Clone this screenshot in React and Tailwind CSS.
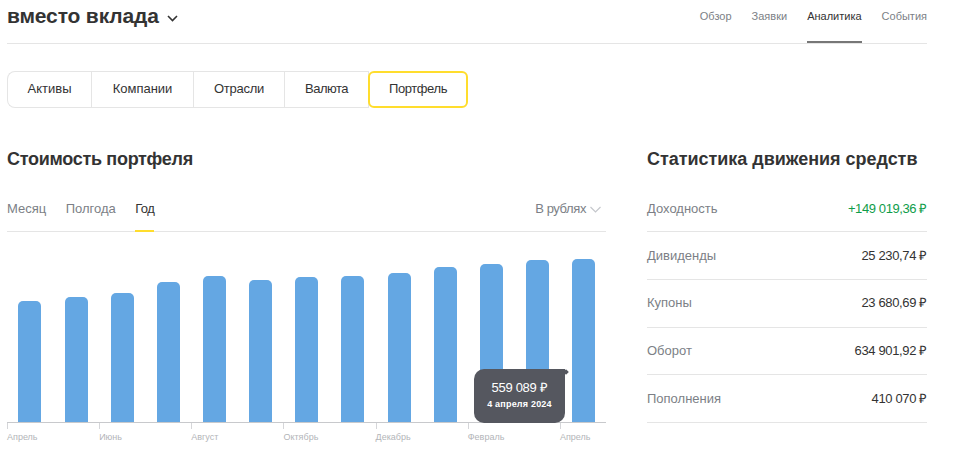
import React from "react";

const navItems = ["Обзор", "Заявки", "Аналитика", "События"];
const tabs = [
  { label: "Активы", width: "w-[84px]", tracking: "" },
  { label: "Компании", width: "w-[102px]", tracking: "" },
  { label: "Отрасли", width: "w-[91px]", tracking: "tracking-[-0.25px]" },
  { label: "Валюта", width: "w-[84px]", tracking: "tracking-[-0.5px]" },
];
const bars = [121, 125, 129, 140, 146, 142, 145, 146, 149, 155, 158, 162, 163];
const months = ["Апрель", "Июнь", "Август", "Октябрь", "Декабрь", "Февраль", "Апрель"];
const stats = [
  { label: "Дивиденды", value: "25 230,74 ₽" },
  { label: "Купоны", value: "23 680,69 ₽" },
  { label: "Оборот", value: "634 901,92 ₽" },
  { label: "Пополнения", value: "410 070 ₽" },
];

const App = () => {
  return (
    <div className="h-[469px] w-[960px] overflow-hidden bg-white pl-[7px] font-['Liberation_Sans',sans-serif] text-[#333333]">
      <div className="flex h-[44px] w-[920px] items-start justify-between border-b border-[#e5e5e5]">
        <div className="flex items-center gap-[8px]">
          <h1 className="text-[21px] leading-[32px] font-bold tracking-[-0.15px] text-[#333333]">вместо вклада</h1>
          <svg width="11" height="7" viewBox="0 0 11 7" fill="none" className="mt-[4px]">
            <path d="M1 1l4.5 4.5L10 1" stroke="#333333" strokeWidth="1.6" />
          </svg>
        </div>
        <nav className="flex gap-[20px]">
          {navItems.map((item) => (
            <div
              key={item}
              className={`h-[43px] pt-[8px] text-[11px] leading-[16px] ${
                item === "Аналитика" ? "border-b-2 border-[#777777] text-[#333333]" : "text-[#7c7f86]"
              }`}
            >
              {item}
            </div>
          ))}
        </nav>
      </div>

      <div className="mt-[27px] flex h-[37px] w-[461px]">
        <div className="flex rounded-l-[8px] border border-r-0 border-[#e5e5e5]">
          {tabs.map((tab) => (
            <div
              key={tab.label}
              className={`flex items-center justify-center border-r border-[#e5e5e5] pb-[1px] text-[13px] ${tab.width} ${tab.tracking}`}
            >
              {tab.label}
            </div>
          ))}
        </div>
        <div className="-ml-px flex flex-1 items-center justify-center rounded-[6px] border-2 border-[#ffdd2d] pb-[1px] text-[13px] tracking-[-0.4px]">
          Портфель
        </div>
      </div>

      <div className="mt-[38px] flex items-start">
        <div className="w-[599px]">
          <h2 className="text-[18px] leading-[26px] font-bold tracking-[-0.3px] text-[#333333]">Стоимость портфеля</h2>
          <div className="mt-[21px] flex h-[39px] items-start justify-between border-b border-[#e5e5e5] pt-[6px]">
            <div className="flex gap-[19.5px] text-[13px] leading-[20px] text-[#7c7f86]">
              <span>Месяц</span>
              <span>Полгода</span>
              <span className="relative tracking-[-0.6px] text-[#333333]">
                Год
                <span className="absolute top-[31px] right-0 left-0 h-[2px] bg-[#ffdd2d]" />
              </span>
            </div>
            <div className="flex items-center gap-[4px] pr-[5px] text-[13px] leading-[20px] tracking-[-0.4px] text-[#7c7f86]">
              В рублях
              <svg width="11" height="7" viewBox="0 0 11 7" fill="none">
                <path d="M0.5 1l5 5 5-5" stroke="#c5c7cc" strokeWidth="1.2" />
              </svg>
            </div>
          </div>

          <div className="relative">
            <div className="flex h-[191px] items-end justify-between border-b border-[#c8c9cc] pr-[10.8px] pl-[11.4px]">
              {bars.map((height, i) => (
                <div key={i} className="w-[23px] rounded-t-[5px] bg-[#64a7e3]" style={{ height }} />
              ))}
            </div>
            <div className="absolute top-[137px] right-[41px] flex h-[54px] w-[91px] flex-col items-center rounded-[10px] rounded-tr-none bg-[#55575f] pt-[11px] text-white">
              <span className="text-[13px] leading-[16px] tracking-[-0.3px]">559 089 ₽</span>
              <span className="mt-[2px] text-[9px] leading-[12px] font-bold tracking-[0.2px]">4 апреля 2024</span>
              <span className="absolute top-[1px] right-[-3px] size-[4px] rotate-45 bg-[#55575f]" />
            </div>
            <div className="grid grid-cols-13">
              {months.map((month, i) => (
                <div key={i} className="col-span-2 last:col-span-1">
                  <div className="h-[6px] w-px bg-[#d5d6d9]" />
                  <div className="mt-[2px] text-[9px] leading-[12px] whitespace-nowrap text-[#b3b5b9]">{month}</div>
                </div>
              ))}
            </div>
          </div>
        </div>

        <div className="ml-[41px] w-[280px]">
          <h2 className="text-[18px] leading-[26px] font-bold tracking-[-0.03px] whitespace-nowrap text-[#333333]">Статистика движения средств</h2>
          <div className="mt-[21px]">
            <div className="flex h-[39px] items-start justify-between border-b border-[#e5e5e5] pt-[6px] text-[13px] leading-[20px]">
              <span className="text-[#7c7f86]">Доходность</span>
              <span className="tracking-[-0.4px] text-[#0f9d4a]">+149 019,36 ₽</span>
            </div>
            {stats.map((row) => (
              <div key={row.label} className="flex h-[47.75px] items-center justify-between border-b border-[#e5e5e5] text-[13px]">
                <span className="text-[#7c7f86]">{row.label}</span>
                <span className="tracking-[-0.35px] text-[#333333]">{row.value}</span>
              </div>
            ))}
          </div>
        </div>
      </div>
    </div>
  );
};

export default App;
